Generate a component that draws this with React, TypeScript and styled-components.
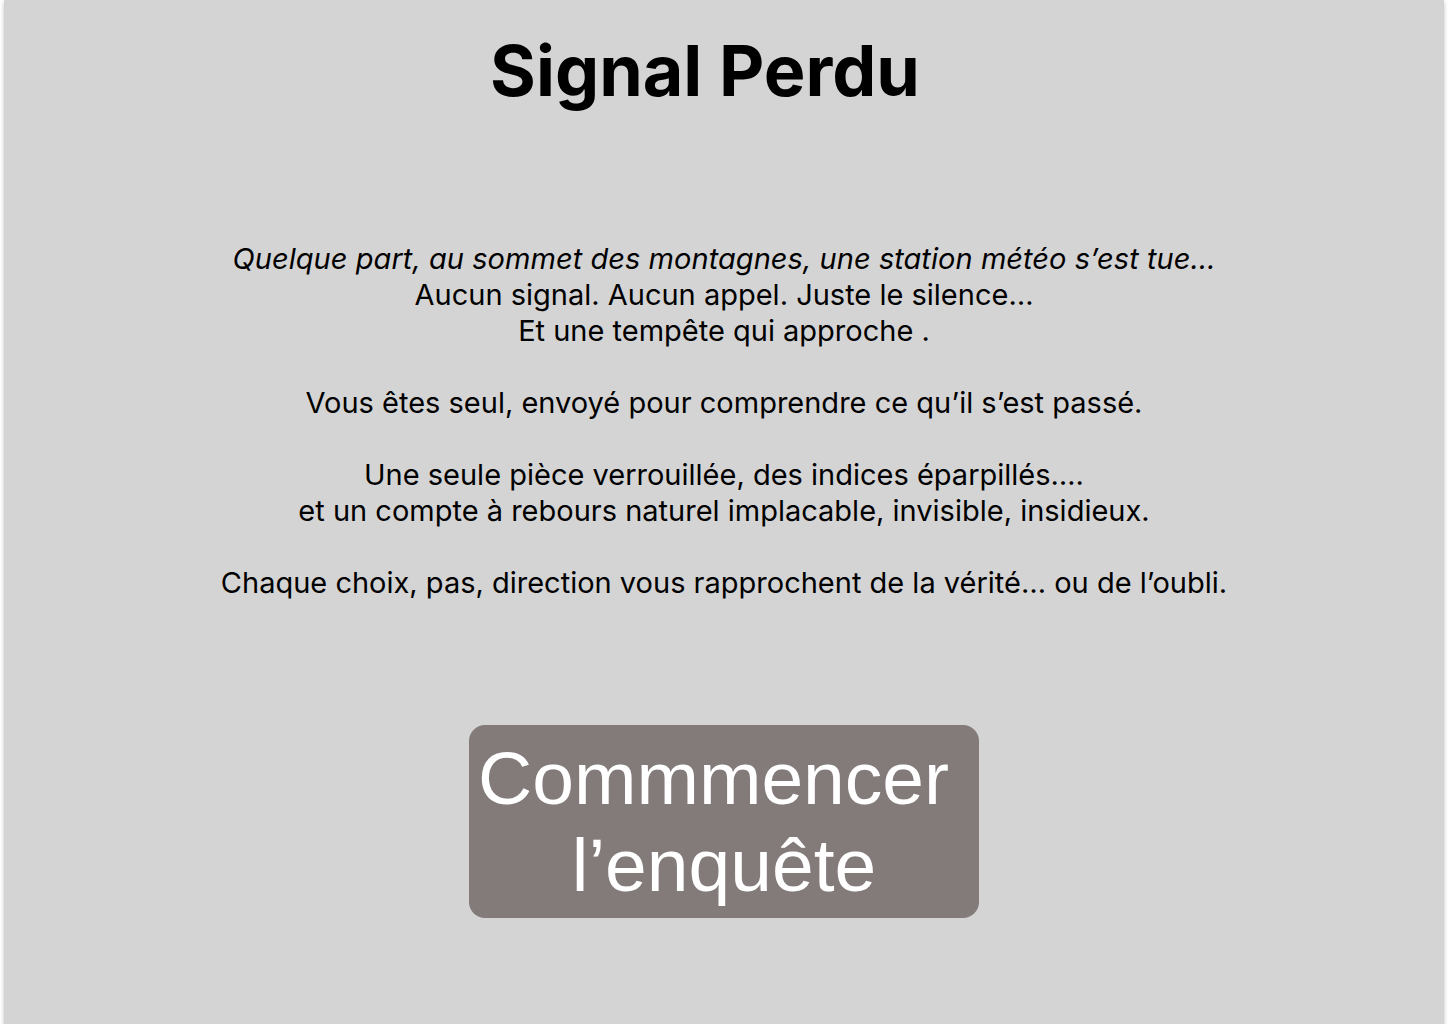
import React from "react";
import styled, { createGlobalStyle } from "styled-components";

const Global = createGlobalStyle`
  html, body { margin: 0; padding: 0; background: #ffffff; }
  body { font-family: Inter, "Noto Sans", sans-serif; }
`;

const Frame = styled.main`
  width: 1440px;
  height: 1024px;
  margin: 0 auto;
  background: #d4d4d4;
  box-shadow: 0 2px 4px rgba(0, 0, 0, 0.25);
  display: flex;
  flex-direction: column;
  align-items: center;
  box-sizing: border-box;
  padding-top: 26px;
`;

const Title = styled.h1`
  margin: 0;
  padding-right: 38px;
  font-family: Inter, sans-serif;
  font-weight: 700;
  font-size: 70px;
  line-height: 90px;
  color: #000;
`;

const Story = styled.div`
  margin-top: 125px;
  font-family: Inter, sans-serif;
  font-size: 29px;
  line-height: 36px;
  color: #000;
  text-align: center;
`;

const Line = styled.p<{ $italic?: boolean }>`
  margin: 0;
  font-style: ${(p) => (p.$italic ? "italic" : "normal")};
  letter-spacing: ${(p) => (p.$italic ? "0.05px" : "0")};
`;

const Gap = styled.div`
  height: 36px;
`;

const StartButton = styled.button`
  margin-top: 124px;
  width: 510px;
  height: 193px;
  border: none;
  border-radius: 16px;
  background: #837a7a;
  color: #ffffff;
  font-family: "Liberation Sans", Arial, sans-serif;
  font-size: 75px;
  line-height: 87px;
  padding: 0;
  text-align: center;
  cursor: pointer;
`;

export default function App() {
  return (
    <>
      <Global />
      <Frame>
        <Title>Signal Perdu</Title>
        <Story>
          <Line $italic>Quelque part, au sommet des montagnes, une station météo s’est tue…</Line>
          <Line>Aucun signal. Aucun appel. Juste le silence…</Line>
          <Line>Et une tempête qui approche .</Line>
          <Gap />
          <Line>Vous êtes seul, envoyé pour comprendre ce qu’il s’est passé.</Line>
          <Gap />
          <Line>Une seule pièce verrouillée, des indices éparpillés….</Line>
          <Line>et un compte à rebours naturel implacable, invisible, insidieux.</Line>
          <Gap />
          <Line>Chaque choix, pas, direction vous rapprochent de la vérité… ou de l’oubli.</Line>
        </Story>
        <StartButton>
          Commmencer{"\u00a0"}
          <br />
          l’enquête
        </StartButton>
      </Frame>
    </>
  );
}
